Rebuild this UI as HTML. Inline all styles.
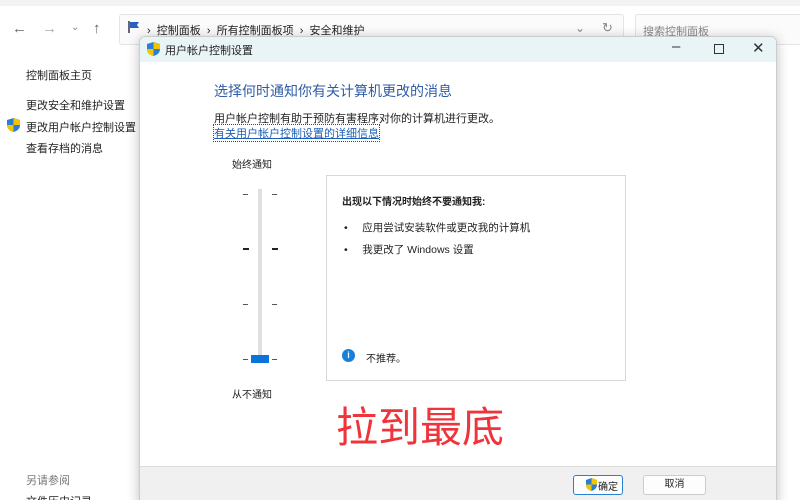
<!DOCTYPE html>
<html><head><meta charset="utf-8"><style>
*{margin:0;padding:0;box-sizing:border-box}
html,body{width:800px;height:500px;overflow:hidden}
body{background:#fff;font-family:"Liberation Sans","Noto Sans CJK SC",sans-serif;font-size:11px;color:#222;position:relative}
.a{position:absolute}
</style></head><body>
<div class="a" style="left:0;top:0;width:800px;height:6px;background:#f3f3f3"></div>
<div class="a" style="left:12px;top:20px;color:#666;font-size:15px">←</div>
<div class="a" style="left:42px;top:20px;color:#aaa;font-size:15px">→</div>
<div class="a" style="left:71px;top:22px;color:#888;font-size:10px">⌄</div>
<div class="a" style="left:93px;top:20px;color:#666;font-size:15px">↑</div>
<div class="a" style="left:119px;top:14px;width:505px;height:31px;border:1px solid #e4e4e4;border-radius:3px;background:#fbfbfb"></div>
<svg class="a" style="left:127px;top:20px" width="14" height="14"><path d="M2 1v12" stroke="#335" stroke-width="1.5"/><path d="M3 2h9l-2 3 2 3H3z" fill="#2d5ec0"/></svg>
<div class="a" style="left:147px;top:22px;font-size:11px;color:#222">›&nbsp; 控制面板 &nbsp;›&nbsp; 所有控制面板项 &nbsp;›&nbsp; 安全和维护</div>
<div class="a" style="left:575px;top:21px;color:#888;font-size:12px">⌄</div>
<div class="a" style="left:602px;top:20px;color:#888;font-size:13px">↻</div>
<div class="a" style="left:635px;top:14px;width:170px;height:31px;border:1px solid #e4e4e4;border-radius:3px;background:#fbfbfb"></div>
<div class="a" style="left:643px;top:23px;color:#888;font-size:11px">搜索控制面板</div>
<div class="a" style="left:26px;top:67px">控制面板主页</div>
<div class="a" style="left:26px;top:97px">更改安全和维护设置</div>
<svg class="a" style="left:7px;top:118px" width="13" height="14"><path d="M6.5 0L13 2v5c0 4-3 6-6.5 7C3 13 0 11 0 7V2z" fill="#2a7fd4"/><path d="M6.5 0L13 2v5H6.5zM0 7h6.5v7C3 13 0 11 0 7z" fill="#f5c400"/></svg>
<div class="a" style="left:26px;top:119px">更改用户帐户控制设置</div>
<div class="a" style="left:26px;top:140px">查看存档的消息</div>
<div class="a" style="left:26px;top:472px;color:#777">另请参阅</div>
<div class="a" style="left:26px;top:493px">文件历史记录</div>
<div class="a" style="left:139px;top:36px;width:638px;height:470px;background:#fff;border:1px solid #ccc;border-radius:6px 6px 0 0;box-shadow:0 2px 12px rgba(0,0,0,.25);overflow:hidden">
 <div class="a" style="left:0;top:0;width:638px;height:25px;background:#e9f4f7"></div>
 <svg class="a" style="left:7px;top:5px" width="13" height="14"><path d="M6.5 0L13 2v5c0 4-3 6-6.5 7C3 13 0 11 0 7V2z" fill="#2a7fd4"/><path d="M6.5 0L13 2v5H6.5zM0 7h6.5v7C3 13 0 11 0 7z" fill="#f5c400"/></svg>
 <div class="a" style="left:25px;top:5px;font-size:11px">用户帐户控制设置</div>
 <div class="a" style="left:532px;top:1px;font-size:15px;color:#333">–</div>
 <div class="a" style="left:574px;top:7px;width:10px;height:10px;border:1.3px solid #333"></div>
 <div class="a" style="left:612px;top:2px;font-size:15px;color:#333">✕</div>
 <div class="a" style="left:74px;top:44px;font-size:14px;color:#2f5ca8">选择何时通知你有关计算机更改的消息</div>
 <div class="a" style="left:74px;top:73px">用户帐户控制有助于预防有害程序对你的计算机进行更改。</div>
 <div class="a" style="left:74px;top:88px;color:#1b5fb8;text-decoration:underline;outline:1px dotted #444">有关用户帐户控制设置的详细信息</div>
 <div class="a" style="left:92px;top:119px;font-size:10px">始终通知</div>
 <div class="a" style="left:118px;top:152px;width:4px;height:172px;background:#e0e0e0"></div>
 <div class="a" style="left:103px;top:157px;width:5px;height:1px;background:#555"></div><div class="a" style="left:132px;top:157px;width:5px;height:1px;background:#555"></div>
 <div class="a" style="left:103px;top:211px;width:6px;height:2px;background:#222"></div><div class="a" style="left:132px;top:211px;width:6px;height:2px;background:#222"></div>
 <div class="a" style="left:103px;top:267px;width:5px;height:1px;background:#555"></div><div class="a" style="left:132px;top:267px;width:5px;height:1px;background:#555"></div>
 <div class="a" style="left:103px;top:322px;width:5px;height:1px;background:#555"></div><div class="a" style="left:132px;top:322px;width:5px;height:1px;background:#555"></div>
 <div class="a" style="left:111px;top:318px;width:18px;height:8px;background:#0a74d9"></div>
 <div class="a" style="left:92px;top:349px;font-size:10px">从不通知</div>
 <div class="a" style="left:186px;top:138px;width:300px;height:206px;border:1px solid #d8d8d8"></div>
 <div class="a" style="left:202px;top:156px;font-size:10px;font-weight:bold">出现以下情况时始终不要通知我:</div>
 <div class="a" style="left:204px;top:183px;font-size:10.5px">•&nbsp;&nbsp;&nbsp;&nbsp; 应用尝试安装软件或更改我的计算机</div>
 <div class="a" style="left:204px;top:205px;font-size:10.5px">•&nbsp;&nbsp;&nbsp;&nbsp; 我更改了 Windows 设置</div>
 <div class="a" style="left:202px;top:312px;width:13px;height:13px;border-radius:50%;background:#1a7fd6;color:#fff;font-size:9px;font-weight:bold;text-align:center;line-height:13px">i</div>
 <div class="a" style="left:226px;top:313px;font-size:10px">不推荐。</div>
 <div class="a" style="left:196px;top:366px;font-size:42px;line-height:50px;color:#f0343c;white-space:nowrap">拉到最底</div>
 <div class="a" style="left:0;top:429px;width:638px;height:50px;background:#f0f0f0;border-top:1px solid #ddd"></div>
 <div class="a" style="left:433px;top:438px;width:50px;height:20px;border:1px solid #2a7fd4;border-radius:3px;background:#fdfdfd"></div>
 <svg class="a" style="left:446px;top:441px" width="11" height="13"><path d="M5.5 0L11 2v4.5c0 3.5-2.5 5.5-5.5 6.5C2.5 12 0 10 0 6.5V2z" fill="#2a7fd4"/><path d="M5.5 0L11 2v4.5H5.5zM0 6.5h5.5V13C2.5 12 0 10 0 6.5z" fill="#f5c400"/></svg>
 <div class="a" style="left:458px;top:441px;font-size:10px">确定</div>
 <div class="a" style="left:503px;top:438px;width:63px;height:20px;border:1px solid #ccc;border-radius:3px;background:#fdfdfd;font-size:10px;text-align:center;line-height:18px">取消</div>
</div>
</body></html>
